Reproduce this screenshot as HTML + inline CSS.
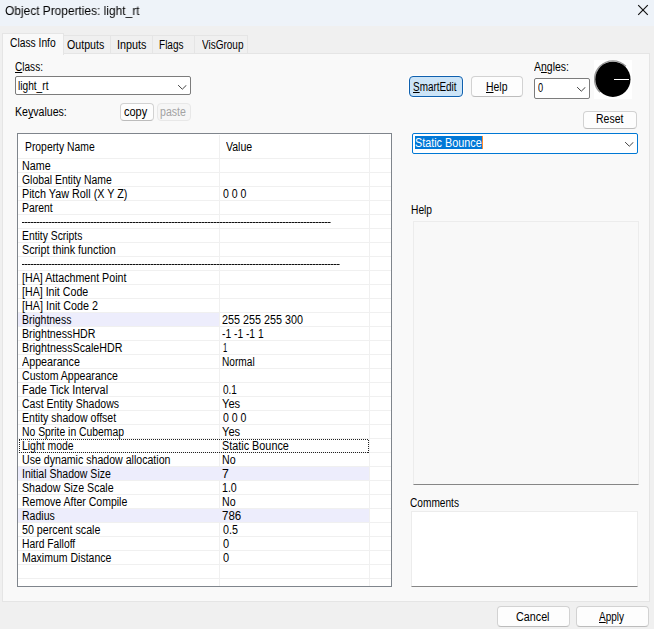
<!DOCTYPE html>
<html><head><meta charset="utf-8"><title>Object Properties</title>
<style>
*{box-sizing:border-box;margin:0;padding:0}
html,body{width:654px;height:629px;overflow:hidden;background:#f0f0f0}
body{font-family:"Liberation Sans",sans-serif;font-size:12px;color:#000;position:relative}
.abs{position:absolute}
.t{position:absolute;white-space:nowrap;line-height:14px;font-size:12px;transform-origin:0 0;z-index:10}
#title{left:0;top:0;width:654px;height:26px;background:#eef3f9}
.tab{position:absolute;top:35px;height:19px;border:1px solid #e5e5e5;border-bottom:none;background:#f0f0f0}
.tab.sel{top:33px;height:22px;background:#f9f9f9;z-index:3}
#page{left:2px;top:53px;width:648px;height:549px;background:#f9f9f9;border:1px solid #e5e5e5;z-index:1}
.btn{position:absolute;background:#fdfdfd;border:1px solid #d2d2d2;border-bottom-color:#bcbcbc;border-radius:4px;z-index:4}
.combo{position:absolute;background:#fff;border:1px solid #7c7c7c;border-radius:2px;z-index:4}
.combo svg{position:absolute}
#list{left:17px;top:133px;width:375px;height:454px;background:#fff;border:1px solid #7f858c;z-index:4}
.hl{position:absolute;left:18px;height:13px;background:#ededfc;z-index:6}
.dash{position:absolute;left:22px;height:1px;z-index:7;background:repeating-linear-gradient(90deg,#111 0,#111 2px,#7a7a7a 2px,#7a7a7a 3px)}
.focus{position:absolute;left:19px;width:350px;height:14px;z-index:8;
 background:
  repeating-linear-gradient(90deg,#222 0,#222 1px,transparent 1px,transparent 2px) 0 0/100% 1px no-repeat,
  repeating-linear-gradient(90deg,#222 0,#222 1px,transparent 1px,transparent 2px) 0 100%/100% 1px no-repeat,
  repeating-linear-gradient(0deg,#222 0,#222 1px,transparent 1px,transparent 2px) 0 0/1px 100% no-repeat,
  repeating-linear-gradient(0deg,#222 0,#222 1px,transparent 1px,transparent 2px) 100% 0/1px 100% no-repeat}
.hline{position:absolute;left:18px;width:373px;height:1px;background:#f0f0f0;z-index:5}
.vline{position:absolute;top:135px;height:451px;width:1px;background:#f0f0f0;z-index:5}
u{text-decoration:underline;text-underline-offset:1px;text-decoration-thickness:1px}
</style></head><body>
<div id="title" class="abs"></div>
<svg class="abs" style="left:637px;top:4px;z-index:5" width="12" height="12" viewBox="0 0 12 12"><path d="M1.2 1.2 L10.8 10.8 M10.8 1.2 L1.2 10.8" stroke="#111" stroke-width="1.15" fill="none"/></svg>

<div class="tab sel" style="left:2px;width:62px"></div>
<div class="tab" style="left:63px;width:48px"></div>
<div class="tab" style="left:110px;width:43px"></div>
<div class="tab" style="left:152px;width:43px"></div>
<div class="tab" style="left:194px;width:54px"></div>
<div id="page" class="abs"></div>

<div class="combo" style="left:15px;top:76px;width:176px;height:19px">
<svg style="left:162px;top:8px" width="9" height="5" viewBox="0 0 9 5"><path d="M0.4 0.4 L4.3 4.2 L8.2 0.4" stroke="#444" stroke-width="1" fill="none" stroke-linecap="round" stroke-linejoin="round"/></svg></div>
<div class="btn" style="left:120px;top:103px;width:34px;height:18px"></div>
<div class="btn" style="left:157px;top:103px;width:34px;height:18px;background:#f6f6f6;border-color:#e8e8e8"></div>

<div id="list" class="abs"></div>
<div class="hline" style="top:158px"></div>
<div class="hline" style="top:172px"></div>
<div class="hline" style="top:186px"></div>
<div class="hline" style="top:200px"></div>
<div class="hline" style="top:214px"></div>
<div class="hline" style="top:228px"></div>
<div class="hline" style="top:242px"></div>
<div class="hline" style="top:256px"></div>
<div class="hline" style="top:270px"></div>
<div class="hline" style="top:284px"></div>
<div class="hline" style="top:298px"></div>
<div class="hline" style="top:312px"></div>
<div class="hline" style="top:326px"></div>
<div class="hline" style="top:340px"></div>
<div class="hline" style="top:354px"></div>
<div class="hline" style="top:368px"></div>
<div class="hline" style="top:382px"></div>
<div class="hline" style="top:396px"></div>
<div class="hline" style="top:410px"></div>
<div class="hline" style="top:424px"></div>
<div class="hline" style="top:438px"></div>
<div class="hline" style="top:452px"></div>
<div class="hline" style="top:466px"></div>
<div class="hline" style="top:480px"></div>
<div class="hline" style="top:494px"></div>
<div class="hline" style="top:508px"></div>
<div class="hline" style="top:522px"></div>
<div class="hline" style="top:536px"></div>
<div class="hline" style="top:550px"></div>
<div class="hline" style="top:564px"></div>
<div class="hline" style="top:578px"></div>
<div class="vline" style="left:219px"></div>
<div class="vline" style="left:369px"></div>
<div class="dash" style="top:222px;width:309px"></div>
<div class="dash" style="top:264px;width:318px"></div>
<div class="hl" style="top:313px;width:201px"></div>
<div class="focus" style="top:439px"></div>
<div class="hl" style="top:467px;width:351px"></div>
<div class="hl" style="top:509px;width:351px"></div>

<div class="btn" style="left:409px;top:76px;width:54px;height:21px;background:#cce4f7;border-color:#0f60ae;box-shadow:0 0 0 1px rgba(255,255,255,.9)"></div>
<div class="btn" style="left:471px;top:76px;width:52px;height:21px"></div>
<div class="combo" style="left:534px;top:78px;width:56px;height:21px">
<svg style="left:42px;top:8px" width="9" height="5" viewBox="0 0 9 5"><path d="M0.4 0.4 L4.3 4.2 L8.2 0.4" stroke="#444" stroke-width="1" fill="none" stroke-linecap="round" stroke-linejoin="round"/></svg></div>
<div class="abs" style="left:594px;top:60px;width:38px;height:39px;background:#fff;z-index:4"></div>
<svg class="abs" style="left:594px;top:60px;z-index:5" width="38" height="39" viewBox="0 0 38 39"><path d="M31.9 6.3 A18.3 18.3 0 0 0 5.9 32.3" stroke="#9a9a9a" stroke-width="1.3" fill="none"/><circle cx="18.9" cy="19.3" r="17.6" fill="#000"/><path d="M20 19.5 H35" stroke="#fff" stroke-width="1" shape-rendering="crispEdges"/></svg>
<div class="btn" style="left:583px;top:111px;width:54px;height:18px"></div>
<div class="combo" style="left:412px;top:133px;width:226px;height:21px;border-color:#0078d4">
<div style="position:absolute;left:2px;top:2px;width:67px;height:13px;background:#0078d7"></div><div style="position:absolute;left:69px;top:2px;width:1px;height:13px;background:#ff8a2a"></div>
<svg style="left:212px;top:8px" width="9" height="5" viewBox="0 0 9 5"><path d="M0.4 0.4 L4.3 4.2 L8.2 0.4" stroke="#444" stroke-width="1" fill="none" stroke-linecap="round" stroke-linejoin="round"/></svg></div>
<div class="abs" style="left:413px;top:221px;width:226px;height:264px;background:#f8f8f8;border:1px solid #ececec;border-bottom:1px solid #868686;z-index:4"></div>
<div class="abs" style="left:411px;top:511px;width:227px;height:76px;background:#fff;border:1px solid #ececec;border-bottom:1px solid #868686;z-index:4"></div>

<div class="btn" style="left:497px;top:606px;width:73px;height:21px"></div>
<div class="btn" style="left:576px;top:606px;width:73px;height:21px"></div>
<span class="t" style="left:5.45px;top:4px;transform:scaleX(0.9536);font-size:12.5px;color:#000;will-change:transform">Object Properties: light_rt</span>
<span class="t" style="left:9.54px;top:36px;transform:scaleX(0.8558);">Class Info</span>
<span class="t" style="left:67.21px;top:38px;transform:scaleX(0.8854);">Outputs</span>
<span class="t" style="left:116.70px;top:38px;transform:scaleX(0.9000);">Inputs</span>
<span class="t" style="left:159.16px;top:38px;transform:scaleX(0.8357);">Flags</span>
<span class="t" style="left:201.80px;top:38px;transform:scaleX(0.8320);">VisGroup</span>
<span class="t" style="left:14.76px;top:60px;transform:scaleX(0.8387);"><u>C</u>lass:</span>
<span class="t" style="left:17.85px;top:79px;transform:scaleX(0.8457);">light_rt</span>
<span class="t" style="left:15.02px;top:105px;transform:scaleX(0.8825);">Ke<u>y</u>values:</span>
<span class="t" style="left:124.28px;top:105px;transform:scaleX(0.9167);">copy</span>
<span class="t" style="left:160.42px;top:105px;transform:scaleX(0.8821);color:#a3a3a3">paste</span>
<span class="t" style="left:24.94px;top:140px;transform:scaleX(0.8633);">Property Name</span>
<span class="t" style="left:225.70px;top:140px;transform:scaleX(0.8793);">Value</span>
<span class="t" style="left:413.17px;top:80px;transform:scaleX(0.8269);"><u>S</u>martEdit</span>
<span class="t" style="left:486.03px;top:80px;transform:scaleX(0.8696);"><u>H</u>elp</span>
<span class="t" style="left:534.20px;top:60px;transform:scaleX(0.8718);">A<u>n</u>gles:</span>
<span class="t" style="left:537.90px;top:81px;transform:scaleX(0.7667);">0</span>
<span class="t" style="left:596.03px;top:112px;transform:scaleX(0.8733);">Reset</span>
<span class="t" style="left:415.30px;top:136px;transform:scaleX(0.9000);color:#fff">Static Bounce</span>
<span class="t" style="left:411.35px;top:203px;transform:scaleX(0.8522);">Help</span>
<span class="t" style="left:410.36px;top:496px;transform:scaleX(0.8439);">Comments</span>
<span class="t" style="left:516.20px;top:610px;transform:scaleX(0.8972);">Cancel</span>
<span class="t" style="left:599.30px;top:610px;transform:scaleX(0.8367);"><u>A</u>pply</span>
<span class="t" style="left:21.61px;top:159px;transform:scaleX(0.8933);">Name</span>
<span class="t" style="left:21.63px;top:173px;transform:scaleX(0.8676);">Global Entity Name</span>
<span class="t" style="left:21.60px;top:187px;transform:scaleX(0.9000);">Pitch Yaw Roll (X Y Z)</span>
<span class="t" style="left:222.90px;top:187px;transform:scaleX(0.8769);">0 0 0</span>
<span class="t" style="left:21.63px;top:201px;transform:scaleX(0.8676);">Parent</span>
<span class="t" style="left:21.64px;top:229px;transform:scaleX(0.8623);">Entity Scripts</span>
<span class="t" style="left:21.60px;top:243px;transform:scaleX(0.8951);">Script think function</span>
<span class="t" style="left:21.61px;top:271px;transform:scaleX(0.8897);">[HA] Attachment Point</span>
<span class="t" style="left:21.61px;top:285px;transform:scaleX(0.8863);">[HA] Init Code</span>
<span class="t" style="left:21.60px;top:299px;transform:scaleX(0.8976);">[HA] Init Code 2</span>
<span class="t" style="left:21.63px;top:313px;transform:scaleX(0.8709);">Brightness</span>
<span class="t" style="left:222.00px;top:313px;transform:scaleX(0.8989);">255 255 255 300</span>
<span class="t" style="left:21.61px;top:327px;transform:scaleX(0.8889);">BrightnessHDR</span>
<span class="t" style="left:222.04px;top:327px;transform:scaleX(0.8553);">-1 -1 -1 1</span>
<span class="t" style="left:21.61px;top:341px;transform:scaleX(0.8910);">BrightnessScaleHDR</span>
<span class="t" style="left:223.16px;top:341px;transform:scaleX(0.6400);">1</span>
<span class="t" style="left:21.90px;top:355px;transform:scaleX(0.8953);">Appearance</span>
<span class="t" style="left:222.05px;top:355px;transform:scaleX(0.8459);">Normal</span>
<span class="t" style="left:21.62px;top:369px;transform:scaleX(0.8813);">Custom Appearance</span>
<span class="t" style="left:21.59px;top:383px;transform:scaleX(0.9086);">Fade Tick Interval</span>
<span class="t" style="left:222.90px;top:383px;transform:scaleX(0.8312);">0.1</span>
<span class="t" style="left:21.62px;top:397px;transform:scaleX(0.8761);">Cast Entity Shadows</span>
<span class="t" style="left:221.97px;top:397px;transform:scaleX(0.9278);">Yes</span>
<span class="t" style="left:21.62px;top:411px;transform:scaleX(0.8783);">Entity shadow offset</span>
<span class="t" style="left:222.90px;top:411px;transform:scaleX(0.8769);">0 0 0</span>
<span class="t" style="left:21.64px;top:425px;transform:scaleX(0.8641);">No Sprite in Cubemap</span>
<span class="t" style="left:221.97px;top:425px;transform:scaleX(0.9278);">Yes</span>
<span class="t" style="left:21.63px;top:439px;transform:scaleX(0.8672);">Light mode</span>
<span class="t" style="left:222.00px;top:439px;transform:scaleX(0.9028);">Static Bounce</span>
<span class="t" style="left:21.62px;top:453px;transform:scaleX(0.8832);">Use dynamic shadow allocation</span>
<span class="t" style="left:222.01px;top:453px;transform:scaleX(0.8857);">No</span>
<span class="t" style="left:21.62px;top:467px;transform:scaleX(0.8760);">Initial Shadow Size</span>
<span class="t" style="left:221.88px;top:467px;transform:scaleX(1.0200);">7</span>
<span class="t" style="left:21.61px;top:481px;transform:scaleX(0.8863);">Shadow Size Scale</span>
<span class="t" style="left:222.01px;top:481px;transform:scaleX(0.8867);">1.0</span>
<span class="t" style="left:21.62px;top:495px;transform:scaleX(0.8771);">Remove After Compile</span>
<span class="t" style="left:222.01px;top:495px;transform:scaleX(0.8857);">No</span>
<span class="t" style="left:21.62px;top:509px;transform:scaleX(0.8778);">Radius</span>
<span class="t" style="left:221.94px;top:509px;transform:scaleX(0.9611);">786</span>
<span class="t" style="left:21.61px;top:523px;transform:scaleX(0.8908);">50 percent scale</span>
<span class="t" style="left:222.90px;top:523px;transform:scaleX(0.8937);">0.5</span>
<span class="t" style="left:21.64px;top:537px;transform:scaleX(0.8607);">Hard Falloff</span>
<span class="t" style="left:222.50px;top:537px;transform:scaleX(0.9167);">0</span>
<span class="t" style="left:21.62px;top:551px;transform:scaleX(0.8760);">Maximum Distance</span>
<span class="t" style="left:222.50px;top:551px;transform:scaleX(0.9167);">0</span>
</body></html>
